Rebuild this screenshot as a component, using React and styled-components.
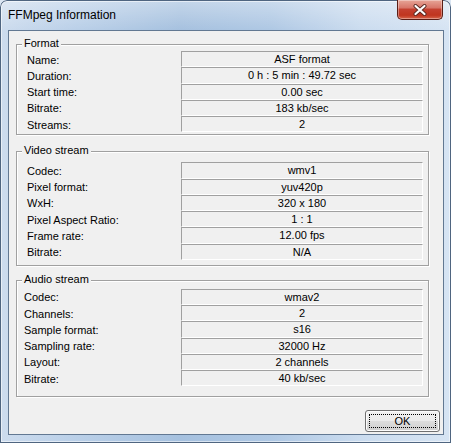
import React from "react";
import styled, { createGlobalStyle } from "styled-components";

const Global = createGlobalStyle`
  html, body { margin: 0; padding: 0; background: #dbe6f3; }
  * { box-sizing: border-box; }
`;

const Window = styled.div`
  position: relative;
  width: 451px;
  height: 443px;
  display: flex;
  flex-direction: column;
  border-radius: 7px 7px 0 0;
  overflow: hidden;
  background:
    linear-gradient(180deg, rgba(255,255,255,0.35) 0px, rgba(255,255,255,0) 30px),
    linear-gradient(90deg, #cddcee 0%, #bcd1e9 15%, #a6c1df 40%, #afc8e4 60%, #cbdcef 80%, #d6e4f3 100%);
  box-shadow: inset 0 0 0 1px #4f6580, inset 0 0 0 2px rgba(255,255,255,0.55);
`;

const TitleBar = styled.div`
  height: 30px;
  display: flex;
  align-items: flex-start;
  padding-left: 8px;
`;

const Title = styled.div`
  font-family: "Liberation Sans", Arial, sans-serif;
  font-size: 12px;
  line-height: 30px;
  color: #000;
`;

const CloseButton = styled.div`
  margin-left: auto;
  margin-right: 8px;
  width: 46px;
  height: 20px;
  border: 1px solid #5a1e16;
  border-top: none;
  border-radius: 0 0 5px 5px;
  background: linear-gradient(180deg, #e7a597 0%, #d8776a 40%, #c4402f 50%, #c0351f 80%, #d6664c 100%);
  box-shadow: inset 0 0 0 1px rgba(255,255,255,0.35);
  display: flex;
  align-items: center;
  justify-content: center;
`;

const Client = styled.div`
  flex: 1;
  margin: 0 7px 8px 8px;
  border: 1px solid #627892;
  background: #f0f0f0;
  display: flex;
  flex-direction: column;
  padding-left: 7px;
  font-family: "Liberation Sans", Arial, sans-serif;
  font-size: 11px;
  color: #000;
`;

const Group = styled.div`
  position: relative;
  width: 413px;
  margin-top: ${(p) => p.$mt}px;
  padding: ${(p) => p.$pt}px 5px ${(p) => p.$pb}px ${(p) => p.$pl}px;
  border: 1px solid #a0a0a0;
  box-shadow: inset 1px 1px 0 #fff, 1px 1px 0 #fff;
`;

const Legend = styled.span`
  position: absolute;
  top: -8px;
  left: 5px;
  padding: 0 2px 0 2px;
  background: #f0f0f0;
  line-height: 13px;
`;

const Row = styled.div`
  display: flex;
  align-items: stretch;
  height: 16.25px;
`;

const Label = styled.div`
  flex: 1;
  display: flex;
  align-items: center;
  padding-top: 1px;
`;

const Value = styled.div`
  width: 242px;
  border-top: 1px solid #a0a0a0;
  border-left: 1px solid #a0a0a0;
  border-bottom: 1px solid #fff;
  border-right: 1px solid #fff;
  display: flex;
  align-items: center;
  justify-content: center;
`;

const Footer = styled.div`
  display: flex;
  justify-content: flex-end;
  margin-top: 13px;
  padding-right: 3px;
`;

const Button = styled.div`
  width: 75px;
  height: 22px;
  border: 1px solid #707070;
  border-radius: 3px;
  background: linear-gradient(180deg, #f2f2f2 0%, #ebebeb 48%, #dddddd 52%, #cfcfcf 100%);
  box-shadow: inset 0 0 0 1px #fcfcfc;
  display: flex;
  align-items: center;
  justify-content: center;
  padding: 3px;
`;

const Focus = styled.div`
  width: 100%;
  height: 100%;
  border: 1px dotted #000;
  display: flex;
  align-items: center;
  justify-content: center;
  font-size: 11px;
`;

const groups = [
  {
    title: "Format",
    mt: 13, pt: 6, pb: 2, pl: 10,
    rows: [
      ["Name:", "ASF format"],
      ["Duration:", "0 h : 5 min : 49.72 sec"],
      ["Start time:", "0.00 sec"],
      ["Bitrate:", "183 kb/sec"],
      ["Streams:", "2"],
    ],
  },
  {
    title: "Video stream",
    mt: 16, pt: 10, pb: 5, pl: 10,
    rows: [
      ["Codec:", "wmv1"],
      ["Pixel format:", "yuv420p"],
      ["WxH:", "320 x 180"],
      ["Pixel Aspect Ratio:", "1 : 1"],
      ["Frame rate:", "12.00 fps"],
      ["Bitrate:", "N/A"],
    ],
  },
  {
    title: "Audio stream",
    mt: 14, pt: 8, pb: 10, pl: 7,
    rows: [
      ["Codec:", "wmav2"],
      ["Channels:", "2"],
      ["Sample format:", "s16"],
      ["Sampling rate:", "32000 Hz"],
      ["Layout:", "2 channels"],
      ["Bitrate:", "40 kb/sec"],
    ],
  },
];

export default function App() {
  return (
    <>
      <Global />
      <Window>
        <TitleBar>
          <Title>FFMpeg Information</Title>
          <CloseButton>
            <svg width="14" height="12" viewBox="0 0 14 12">
              <path d="M2.5 2 L11.5 10 M11.5 2 L2.5 10" stroke="#5a2a22" strokeWidth="4" strokeLinecap="round" />
              <path d="M2.5 2 L11.5 10 M11.5 2 L2.5 10" stroke="#fff" strokeWidth="2.2" strokeLinecap="round" />
            </svg>
          </CloseButton>
        </TitleBar>
        <Client>
          {groups.map((g) => (
            <Group key={g.title} $mt={g.mt} $pt={g.pt} $pb={g.pb} $pl={g.pl}>
              <Legend>{g.title}</Legend>
              {g.rows.map(([l, v], i) => (
                <Row key={i}>
                  <Label>{l}</Label>
                  <Value>{v}</Value>
                </Row>
              ))}
            </Group>
          ))}
          <Footer>
            <Button>
              <Focus>OK</Focus>
            </Button>
          </Footer>
        </Client>
      </Window>
    </>
  );
}
